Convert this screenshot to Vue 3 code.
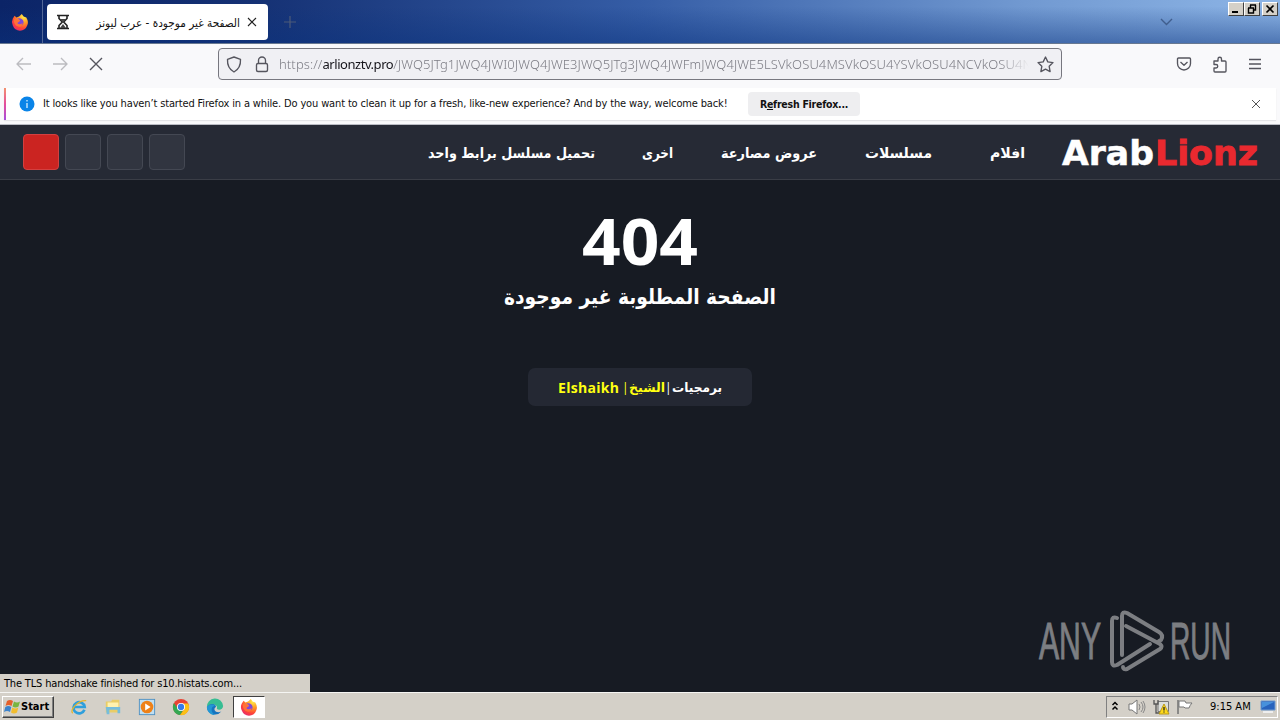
<template>
  <div class="screen">
    <div class="tab-bar">
      <div class="firefox-view">
        <svg width="18" height="18" viewBox="0 0 20 20"><use href="#firefox" /></svg>
      </div>
      <div class="tab">
        <svg class="hourglass" width="14" height="16" viewBox="0 0 14 16">
          <path d="M1 1.500h12M1 14.500h12M3 2v2.500L6.300 8 3 11.500V14M11 2v2.500L7.700 8l3.300 3.500V14" fill="none" stroke="#222" stroke-width="1.600" />
          <path d="M4 5h6L7 7.500zM4 14l3-4 3 4z" fill="#444" />
        </svg>
        <span class="tab-title" dir="rtl">الصفحة غير موجودة - عرب ليونز</span>
        <svg class="tab-close" width="10" height="10" viewBox="0 0 10 10"><path d="M1 1l8 8M9 1L1 9" stroke="#222" stroke-width="1.1" /></svg>
      </div>
      <svg class="new-tab" width="12" height="12" viewBox="0 0 12 12"><path d="M6 0v12M0 6h12" stroke="#4d5b78" stroke-width="1.2" /></svg>
      <svg class="list-tabs" width="13" height="8" viewBox="0 0 13 8"><path d="M1 1l5.500 5.500L12 1" fill="none" stroke="#405e8d" stroke-width="1.4" /></svg>
      <div class="window-buttons">
        <button><svg width="14" height="12"><path d="M3 9h6" stroke="#000" stroke-width="2" /></svg></button>
        <button><svg width="14" height="12"><path d="M5 2h6M5.500 2v3M10.500 2v5H9M3 5h6M3.500 5v5h5V5" fill="none" stroke="#000" stroke-width="1.400" /></svg></button>
        <button class="gap"><svg width="14" height="12"><path d="M3.500 2.500l7 7M10.500 2.500l-7 7" stroke="#000" stroke-width="1.700" /></svg></button>
      </div>
    </div>

    <div class="nav-bar">
      <div class="nav-buttons">
        <svg width="16" height="16" viewBox="0 0 16 16" class="faded"><path d="M15 8H1.500M7 2L1 8l6 6" /></svg>
        <svg width="16" height="16" viewBox="0 0 16 16" class="faded"><path d="M1 8h13.500M9 2l6 6-6 6" /></svg>
        <svg width="16" height="16" viewBox="0 0 16 16" class="stop"><path d="M2 2l12 12M14 2L2 14" /></svg>
      </div>
      <div class="url-bar">
        <svg width="16" height="17" viewBox="0 0 16 17"><path d="M8 1l6.500 2.300c.3 5.700-1.500 10-6.500 12.700C3 13.300 1.200 9 1.500 3.300z" /></svg>
        <svg width="14" height="17" viewBox="0 0 14 17"><rect x="1.500" y="7.500" width="11" height="8" rx="1.500" /><path d="M3.500 7V4.500a3.500 3.500 0 017 0V7" /></svg>
        <div class="url"><span>https://<b>arlionztv.pro</b>/JWQ5JTg1JWQ4JWI0JWQ4JWE3JWQ5JTg3JWQ4JWFmJWQ4JWE5LSVkOSU4MSVkOSU4YSVkOSU4NCVkOSU4N</span></div>
        <svg width="17" height="17" viewBox="0 0 17 17"><path d="M8.500 1l2.300 4.900 5.200.7-3.800 3.700.9 5.300-4.600-2.500-4.600 2.500.9-5.300L1 6.600l5.200-.7z" /></svg>
      </div>
      <div class="toolbar-icons">
        <svg width="16" height="16" viewBox="0 0 16 16"><path d="M2.500 2h11a1 1 0 011 1v4.500a6.500 6.500 0 01-13 0V3a1 1 0 011-1zM4.500 6L8 9.200 11.500 6" /></svg>
        <svg width="16" height="17" viewBox="0 0 16 17"><path d="M2 5h4V3a1.700 1.700 0 013.500 0v2H13a1 1 0 011 1v9a1 1 0 01-1 1H3a1 1 0 01-1-1v-3h2a1.700 1.700 0 000-3.500H2z" /></svg>
        <svg width="14" height="12" viewBox="0 0 14 12"><path d="M1 1.500h12M1 6h12M1 10.500h12" /></svg>
      </div>
    </div>

    <div class="notice-area">
      <div class="notice">
        <span class="info"><svg width="16" height="16" viewBox="0 0 16 16"><circle cx="8" cy="8" r="7.500" fill="#0a84e8" /><path d="M8 7v5M8 4v1.500" stroke="#d5efff" stroke-width="1.300" /></svg></span>
        <span class="notice-text">It looks like you haven’t started Firefox in a while. Do you want to clean it up for a fresh, like-new experience? And by the way, welcome back!</span>
        <button class="refresh"><span>R<u>e</u>fresh Firefox...</span></button>
        <svg class="notice-close" width="10" height="10" viewBox="0 0 10 10"><path d="M1 1l8 8M9 1L1 9" stroke="#555" /></svg>
      </div>
    </div>

    <div class="page" dir="rtl">
      <header class="site-header">
        <svg class="logo" width="198" height="42" direction="ltr">
          <text x="1" y="34" class="logo-white" textLength="92" lengthAdjust="spacingAndGlyphs">Arab</text>
          <text x="94" y="34" class="logo-red" textLength="103" lengthAdjust="spacingAndGlyphs">Lionz</text>
        </svg>
        <nav>
          <svg v-for="item in menu" :key="item.text" :width="item.width" height="30" direction="rtl" :style="{ marginRight: item.gap + 'px' }">
            <text :x="item.width" y="21" :textLength="item.width" lengthAdjust="spacingAndGlyphs">{{ item.text }}</text>
          </svg>
        </nav>
        <div class="social"><i /><i /><i /><i class="red" /></div>
      </header>
      <main>
        <svg class="code" width="118" height="72" direction="ltr"><text x="1" y="60" textLength="116" lengthAdjust="spacingAndGlyphs">404</text></svg>
        <svg class="message" width="272" height="40" direction="rtl"><text x="272" y="26" textLength="272" lengthAdjust="spacingAndGlyphs">الصفحة المطلوبة غير موجودة</text></svg>
        <div class="credit">
          <svg width="50" height="30" direction="rtl"><text x="50" y="20" textLength="50" lengthAdjust="spacingAndGlyphs">برمجيات</text></svg>
          <span class="bar white">|</span>
          <svg class="yellow" width="36" height="30" direction="rtl"><text x="36" y="20" textLength="36" lengthAdjust="spacingAndGlyphs">الشيخ</text></svg>
          <span class="bar yellow">|</span>
          <span class="latin yellow" dir="ltr">Elshaikh</span>
        </div>
      </main>
      <svg class="watermark" width="196" height="64" viewBox="0 0 196 64" direction="ltr">
        <text x="1" y="50" textLength="62" lengthAdjust="spacingAndGlyphs">ANY</text>
        <g fill="none" stroke-width="4" stroke-linejoin="round" stroke-linecap="round">
          <path d="M79 9q-5-2-5 3v41q0 5 5 3l33-21" />
          <path d="M84 46V7q0-5 5-3l32 19q5 3 2 8l-2 1" />
          <path d="M88 17l34 18q3 3 0 5L89 60q-4 1-4-2" />
        </g>
        <text x="132" y="50" textLength="61" lengthAdjust="spacingAndGlyphs">RUN</text>
      </svg>
      <div class="status" dir="ltr"><span>The TLS handshake finished for s10.histats.com...</span></div>
    </div>

    <div class="taskbar">
      <button class="start">
        <svg width="17" height="16" viewBox="0 0 17 16">
          <path d="M3 2q3-2 6 0L7.500 7q-3-2-6 0z" fill="#e5602b" /><path d="M10 2.500q3 2 6 0L14.500 7.500q-3 2-6 0z" fill="#79b540" />
          <path d="M1.300 8q3-2 6 0L6 13q-3-2-6 0z" fill="#3c83cc" /><path d="M8.300 8.500q3 2 6 0L13 13.500q-3 2-6 0z" fill="#f2bd2e" />
        </svg>
        <span>Start</span>
      </button>
      <div class="launchers">
        <svg viewBox="0 0 20 20"><path d="M16 13a6.200 6.200 0 11.300-3H5" fill="none" stroke="#2f9fdc" stroke-width="3" /><path d="M3 17C-1 14 9 2 18 3" fill="none" stroke="#e4b52c" stroke-width="1.500" /></svg>
        <svg viewBox="0 0 20 20"><path d="M2 4h6l1-2h8v14H2z" fill="#e9cd67" /><path d="M4 5h12v5H4z" fill="#fff2af" /><path d="M2 10h16v7h-3v-4H6v5H3z" fill="#76bddc" /></svg>
        <svg viewBox="0 0 20 20"><rect x="1.500" y="1.500" width="17" height="17" fill="#c0dff2" stroke="#4d8fc1" /><circle cx="10" cy="10" r="7" fill="#ee8118" /><path d="M8 6l6 4-6 4z" fill="#fff" /></svg>
        <svg viewBox="0 0 20 20"><circle cx="10" cy="10" r="9" fill="#e84335" /><path d="M2.200 5.500A9 9 0 009 19l4.500-7H6.500z" fill="#34a853" /><path d="M10 6h8a9 9 0 01-9 13l5-7z" fill="#fbc116" /><circle cx="10" cy="10" r="4.500" fill="#fff" /><circle cx="10" cy="10" r="3.500" fill="#347bea" /></svg>
        <svg viewBox="0 0 20 20"><path d="M1 10a9 9 0 0118-1c0 4-5 5-7 3 2-5-6-7-11-2z" fill="#37bd93" /><path d="M1 10c4-6 11-3 10 0-4 2 0 8 6 5A9 9 0 011 10z" fill="#1674bf" /><path d="M1 10c4-4 8-3 9-1-5 0-5 7 0 10-5 0-9-4-9-9z" fill="#2397d4" /></svg>
      </div>
      <div class="running"><svg width="18" height="18" viewBox="0 0 20 20"><use href="#firefox" /></svg></div>
      <div class="tray">
        <svg class="chevrons" width="8" height="11" viewBox="0 0 8 11"><path d="M1.500 4l2.500-2.500L6.500 4M1.500 8.500L4 6l2.500 2.500" fill="none" stroke="#000" stroke-width="1.500" /></svg>
        <svg class="volume" width="18" height="16" viewBox="0 0 18 16"><path d="M1 5h3l5-4v14l-5-4H1z" fill="#fff" stroke="#777" /><path d="M11 5q2 3 0 6M13 3q4 5 0 10M15 2q4 6 0 12" fill="none" stroke="#888" /></svg>
        <svg class="network" width="17" height="16" viewBox="0 0 17 16"><path d="M5 2.500h10.500v10H5z" fill="#dcdedb" stroke="#777" /><path d="M1 1v4h4V1M3 5v9h5" fill="none" stroke="#555" stroke-width="1.300" /><path d="M11 5l5 10H6z" fill="#ffda19" stroke="#b8991a" /><path d="M11 8v3.500M11 12.500v1" stroke="#222" stroke-width="1.300" /></svg>
        <svg class="flag" width="17" height="16" viewBox="0 0 17 16"><path d="M2 1v14" stroke="#777" stroke-width="1.600" /><path d="M3 2h6l1 2h6q-2 2-3 5H9L8 8H3z" fill="#fff" stroke="#777" /></svg>
        <span class="clock">9:15 AM</span>
        <svg width="16" height="14" viewBox="0 0 16 14"><path d="M1 1h14v9H1z" fill="#2863bd" stroke="#6f9ace" /><path d="M2 2h12L2 8z" fill="#4791dc" /><path d="M3 12h10" stroke="#eee" stroke-width="2" /></svg>
      </div>
    </div>

    <svg class="defs" width="0" height="0">
      <defs>
        <radialGradient id="flame" cx=".75" cy=".15" r=".95"><stop offset="0" stop-color="#fff04b" /><stop offset=".4" stop-color="#ff9b24" /><stop offset=".75" stop-color="#ff4338" /><stop offset="1" stop-color="#e52b71" /></radialGradient>
        <g id="firefox">
          <path d="M2 6l2-3 2 2 3-1 3-3 2 3 3 1q3 5 1 9a8.500 8.500 0 01-16 0Q0 10 2 6z" fill="url(#flame)" />
          <path d="M7 6q6-1 7 4 0 4-4 4-5 0-5-5l3 1 2-2z" fill="#8048d8" /><path d="M3 7l5 0 2 2-3 2q2 3 6 0-1 5-5 4-5-1-5-8z" fill="#ff7139" />
        </g>
      </defs>
    </svg>
  </div>
</template>

<script setup>
const menu = [
  { text: 'افلام', width: 35, gap: 0 },
  { text: 'مسلسلات', width: 67, gap: 58 },
  { text: 'عروض مصارعة', width: 96, gap: 48 },
  { text: 'اخرى', width: 31, gap: 48 },
  { text: 'تحميل مسلسل برابط واحد', width: 167, gap: 47 }
]
</script>

<style>
body {
  overflow: hidden;
}
</style>

<style scoped>
.screen {
  width: 1280px;
  height: 720px;
  display: flex;
  flex-direction: column;
  background: #f9f9fb;
  font-family: "DejaVu Sans Condensed", "DejaVu Sans", sans-serif;
  font-stretch: condensed;
  font-size: 11px;
  color: #111;
  overflow: hidden;
  position: relative;
}

svg {
  display: block;
  flex: none;
}

.defs {
  position: absolute;
}

.tab-bar {
  height: 44px;
  box-sizing: border-box;
  flex: none;
  display: flex;
  align-items: center;
  border-bottom: 1px solid #687890;
  background:
    linear-gradient(180deg, transparent 15%, rgba(10, 50, 125, 0.48)),
    linear-gradient(90deg, #0b2467 0%, #153174 20%, #355da6 50%, #7199d1 80%, #8db5e6 100%);
}

.firefox-view {
  width: 43px;
  height: 43px;
  display: flex;
  align-items: center;
  justify-content: center;
  border-right: 1px solid #526797;
  box-sizing: border-box;
  padding-right: 2px;
}

.tab {
  width: 221px;
  height: 36px;
  margin-left: 4px;
  border-radius: 4px;
  background: #fff;
  display: flex;
  align-items: center;
}

.hourglass {
  margin-left: 9px;
}

.tab-title {
  width: 143px;
  margin-left: 27px;
  white-space: nowrap;
  font-size: 11.7px;
  line-height: 20px;
  padding-top: 2px;
}

.tab-close {
  margin-left: 7px;
}

.new-tab {
  margin-left: 16px;
}

.list-tabs {
  margin-left: 864px;
}

.window-buttons {
  display: flex;
  align-self: flex-start;
  margin: 2px 2px 0 auto;
}

.window-buttons button {
  width: 16px;
  height: 14px;
  padding: 0;
  background: #d4d0c8;
  border: 1px solid;
  border-color: #fff #404040 #404040 #fff;
}

.window-buttons .gap {
  margin-left: 2px;
}

.nav-bar {
  height: 44px;
  flex: none;
  display: flex;
  align-items: center;
  padding-bottom: 4px;
  box-sizing: border-box;
}

.nav-bar svg {
  fill: none;
  stroke: #55555e;
  stroke-width: 1.35;
  stroke-linejoin: round;
}

.nav-buttons {
  width: 218px;
  box-sizing: border-box;
  padding-left: 16px;
  display: flex;
  gap: 20px;
}

.nav-bar .faded {
  stroke: #bcbcc0;
}

.url-bar {
  width: 844px;
  height: 32px;
  box-sizing: border-box;
  border: 1px solid #77777f;
  border-radius: 4px;
  background: #f0f0f4;
  display: flex;
  align-items: center;
  padding-left: 7px;
}

.url-bar svg + svg {
  margin-left: 13px;
}

.url {
  width: 750px;
  margin-left: 10px;
  margin-right: 8px;
  overflow: hidden;
  white-space: nowrap;
  font-family: "Noto Sans", sans-serif;
  font-size: 13px;
  font-weight: 300;
  letter-spacing: 0.1px;
  line-height: 20px;
  color: #7c7c84;
  mask-image: linear-gradient(90deg, #000 96%, transparent);
}

.url b {
  font-weight: normal;
  letter-spacing: -0.45px;
  color: #15141a;
}

.toolbar-icons {
  display: flex;
  align-items: center;
  gap: 20px;
  margin-left: 114px;
}

.notice-area {
  height: 37px;
  flex: none;
  box-sizing: border-box;
  border-bottom: 1px solid #bbbdc5;
  padding-left: 4px;
}

.notice {
  width: 1272px;
  height: 32px;
  display: flex;
  align-items: center;
  box-sizing: border-box;
  background: #fff;
  border-left: 2px solid;
  border-image: linear-gradient(#f4966c, #e44e9b, #a34de0) 1;
  box-shadow: 0 1px 1px #e4e4e8;
}

.info {
  margin-left: 13px;
}

.notice-text {
  width: 684px;
  margin-left: 8px;
  white-space: nowrap;
  letter-spacing: -0.145px;
  padding-bottom: 1px;
}

.refresh {
  width: 112px;
  height: 24px;
  margin-left: 21px;
  padding: 0;
  border: 0;
  border-radius: 4px;
  background: #eeeef0;
  font: bold 10.5px "DejaVu Sans Condensed", "DejaVu Sans", sans-serif;
  letter-spacing: -0.25px;
  color: #111;
}

.notice-close {
  margin-left: auto;
  margin-right: 15px;
}

.page {
  height: 567px;
  flex: none;
  background: #171b23;
  position: relative;
  font-family: "Noto Sans", "DejaVu Sans", sans-serif;
}

.site-header {
  height: 55px;
  box-sizing: border-box;
  display: flex;
  align-items: center;
  padding: 0 21px 0 23px;
  background: #262a35;
  border-bottom: 1px solid #3a3d46;
}

.logo {
  overflow: visible;
  font: bold 33px "DejaVu Sans", sans-serif;
}

.logo-white {
  fill: #fff;
  stroke: #fff;
  stroke-width: 0.5;
}

.logo-red {
  fill: #e9292f;
  stroke: #e9292f;
  stroke-width: 0.8;
}

nav {
  display: flex;
  margin-right: 36px;
}

nav svg {
  overflow: visible;
  fill: #fff;
  font: bold 14px "DejaVu Sans", sans-serif;
}

.social {
  display: flex;
  gap: 6px;
  margin-right: auto;
}

.social i {
  width: 36px;
  height: 36px;
  box-sizing: border-box;
  border: 1px solid #444853;
  border-radius: 4px;
  background: #313540;
}

.social .red {
  background: #cb2421;
  border-color: #d34040;
}

main {
  display: flex;
  flex-direction: column;
  align-items: center;
  padding-top: 25px;
  fill: #fff;
}

.code {
  overflow: visible;
  font: bold 64px "Open Sans", sans-serif;
}

.message {
  overflow: visible;
  margin-top: 1px;
  font: bold 21px "DejaVu Sans", sans-serif;
}

.credit {
  width: 224px;
  height: 38px;
  margin-top: 50px;
  border-radius: 7px;
  background: #242833;
  display: flex;
  align-items: center;
  justify-content: center;
  color: #fff;
  font: bold 13px "DejaVu Sans", sans-serif;
}

.credit svg {
  overflow: visible;
}

.credit .yellow {
  fill: #ff1;
  color: #ff1;
}

.bar {
  width: 5px;
  font: 13px/18px "Open Sans", sans-serif;
  text-align: center;
}

.bar.white {
  width: 7px;
}

.latin {
  width: 62px;
  margin-right: 4px;
  font: bold 14px "Open Sans", sans-serif;
  letter-spacing: 0.3px;
}

.watermark {
  position: absolute;
  left: 1038px;
  top: 484px;
  overflow: visible;
  fill: #7c7e82;
  stroke: #7c7e82;
  font: 52px "Liberation Sans Narrow", "Liberation Sans", sans-serif;
}

.watermark g {
  stroke: #7c7e82;
}

.status {
  position: absolute;
  left: 0;
  bottom: 0;
  width: 310px;
  height: 18px;
  background: #d4d0c8;
  padding-left: 4px;
  box-sizing: border-box;
  font: 11px/19px "DejaVu Sans Condensed", "DejaVu Sans", sans-serif;
  letter-spacing: -0.17px;
  color: #000;
}

.taskbar {
  height: 28px;
  flex: none;
  box-sizing: border-box;
  background: #d4d0c8;
  border-top: 1px solid #f5f5f3;
  display: flex;
  align-items: center;
  padding-left: 2px;
  padding-right: 2px;
}

.start {
  width: 52px;
  height: 22px;
  display: flex;
  align-items: center;
  gap: 1px;
  padding: 0 1px;
  border: 1px solid;
  border-color: #fff #404040 #404040 #fff;
  box-shadow: inset -1px -1px #808080;
  background: #d4d0c8;
  font: bold 11px "DejaVu Sans Condensed", "DejaVu Sans", sans-serif;
  color: #000;
}

.start span {
  margin-left: -1px;
}

.launchers {
  display: flex;
  gap: 16px;
  margin-left: 16px;
}

.launchers svg {
  width: 18px;
  height: 18px;
}

.running {
  width: 32px;
  height: 22px;
  margin-left: 9px;
  box-sizing: border-box;
  display: flex;
  align-items: center;
  justify-content: center;
  background: #fff;
  border: 1px solid;
  border-color: #404040 #fff #fff #404040;
}

.tray {
  width: 172px;
  height: 22px;
  box-sizing: border-box;
  margin-left: auto;
  border: 1px solid;
  border-color: #808080 #fff #fff #808080;
  display: flex;
  align-items: center;
  padding-left: 4px;
}

.volume {
  margin-left: 9px;
}

.network {
  margin-left: 7px;
}

.flag {
  margin-left: 6px;
}

.clock {
  width: 41px;
  margin-left: 17px;
  margin-right: 9px;
  white-space: nowrap;
  color: #000;
}
</style>
